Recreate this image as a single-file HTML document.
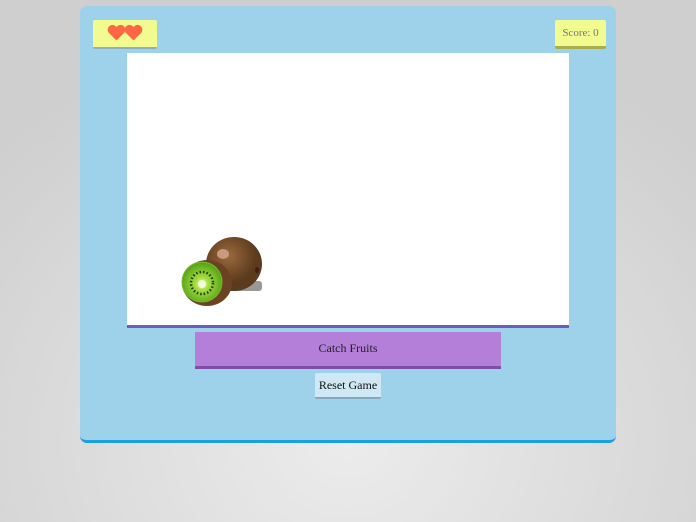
<!DOCTYPE html>
<html><head><meta charset="utf-8"><style>
html,body{margin:0;padding:0;width:696px;height:522px;overflow:hidden}
body{background:radial-gradient(ellipse 480px 420px at 348px 440px,#ececec 0%,#dcdcdc 55%,#cfcfcf 100%);font-family:"Liberation Serif",serif;position:relative}
.box{position:absolute;left:80px;top:6px;width:536px;height:434px;background:#9ed2ea;border-radius:7px;border-bottom:3px solid #1a9fe0}
.hearts{position:absolute;left:93px;top:20px;width:64px;height:27px;background:#f1fb8f;border-bottom:2px solid #8fb0c0;border-radius:2px}
.score{position:absolute;left:555px;top:20px;width:51px;height:26px;background:#f1fb8f;border-bottom:3px solid #a8ad50;font-size:11px;color:#777;text-align:center;line-height:26px;border-radius:2px}
.canvas{position:absolute;left:127px;top:53px;width:442px;height:272px;background:#fff;border-bottom:3px solid #6a5fb0}
.catch{position:absolute;left:195px;top:332px;width:306px;height:34px;background:#b47fd8;border-bottom:3px solid #7d4fa8;text-align:center;line-height:32px;font-size:12px;color:#222}
.reset{position:absolute;left:315px;top:373px;width:66px;height:24px;background:#cfe8f4;border-bottom:2px solid #86a8bc;border-radius:2px;text-align:center;line-height:24px;font-size:12px;color:#111}
</style></head><body>
<div class="box"></div>
<div class="hearts"><svg width="64" height="27" viewBox="0 0 64 27">
<path d="M23.5 20.5 L15.5 12.5 A4.25 4.25 0 0 1 23.5 7 A4.25 4.25 0 0 1 31.5 12.5 Z" fill="#ff6645"/>
<path d="M40.5 20.5 L32.5 12.5 A4.25 4.25 0 0 1 40.5 7 A4.25 4.25 0 0 1 48.5 12.5 Z" fill="#ff6645"/>
</svg></div>
<div class="score">Score: 0</div>
<div class="canvas"><svg style="position:absolute;left:50px;top:180px" width="100" height="80" viewBox="0 0 100 80">
<defs><radialGradient id="g1" cx="40%" cy="35%"><stop offset="0" stop-color="#9a6a3e"/><stop offset="1" stop-color="#5c3a1c"/></radialGradient>
<radialGradient id="g2" cx="50%" cy="55%"><stop offset="0" stop-color="#f4ffd0"/><stop offset="0.3" stop-color="#a8e040"/><stop offset="1" stop-color="#5aa818"/></radialGradient></defs>
<rect x="50" y="48" width="35" height="10" fill="#999" rx="3"/>
<ellipse cx="57" cy="31" rx="28" ry="27" fill="url(#g1)"/>
<ellipse cx="46" cy="21" rx="6" ry="5" fill="#c99a80"/>
<ellipse cx="80" cy="37" rx="2" ry="3" fill="#3a2210"/>
<ellipse cx="30" cy="50" rx="25" ry="23" fill="#6b4322"/>
<ellipse cx="25" cy="49" rx="20" ry="20" fill="url(#g2)" stroke="#7ab62e" stroke-width="1"/>
<circle cx="25" cy="50" r="11" fill="none" stroke="#2a3a10" stroke-width="2.5" stroke-dasharray="1.5 2"/>
<circle cx="25" cy="51" r="4" fill="#f4ffe0"/>
</svg></div>
<div class="catch">Catch Fruits</div>
<div class="reset">Reset Game</div>
</body></html>
